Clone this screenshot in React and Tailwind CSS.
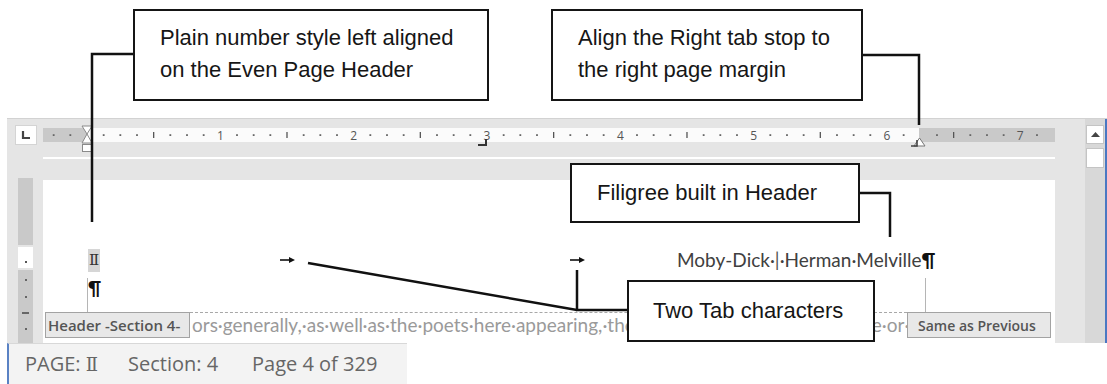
import React from "react";

const INCH = 133.33;
const X0 = 44;

function Ruler() {
  const marks = [];
  for (let i = -2; i <= 64; i++) {
    const x = X0 + i * (INCH / 8);
    if (x < 2 || x > 1010) continue;
    if (i === 0 || i === 50) continue;
    if (i % 8 === 0) {
      marks.push(
        <text key={i} x={x} y={15.5} fontSize="12" fill="#555" textAnchor="middle" fontFamily="'Open Sans', sans-serif">
          {i / 8}
        </text>
      );
    } else if (i % 4 === 0) {
      marks.push(<line key={i} x1={x} x2={x} y1={8} y2={14} stroke="#555" strokeWidth="1.3" />);
    } else {
      marks.push(<rect key={i} x={x - 0.9} y={10.2} width="1.8" height="1.8" fill="#666" />);
    }
  }
  return (
    <svg width="1012" height="30" viewBox="0 0 1012 30" className="block">
      <rect x="0" y="4" width="44" height="14" fill="#c9c9c9" />
      <rect x="44" y="4" width="832" height="14" fill="#fbfbfb" />
      <rect x="876" y="4" width="136" height="14" fill="#c9c9c9" />
      {marks}
      {/* hourglass left indent */}
      <polygon points="39,2 49,2 44,10" fill="#fff" stroke="#8a8a8a" strokeWidth="1" />
      <polygon points="44,10 39,19 49,19" fill="#fff" stroke="#8a8a8a" strokeWidth="1" />
      <rect x="39.5" y="20.5" width="10" height="7" fill="#fff" stroke="#8a8a8a" strokeWidth="1" />
      {/* right tab at 3 */}
      <polyline points="435,21 443,21 443,15" fill="none" stroke="#333" strokeWidth="2" />
      {/* right indent / tab at margin */}
      <polygon points="871,22 882,22 876.5,14" fill="#fff" stroke="#777" strokeWidth="1" />
      <polyline points="868,22 874,22 874,16" fill="none" stroke="#444" strokeWidth="1.6" />
    </svg>
  );
}

function TabArrow() {
  return (
    <svg width="15" height="8" viewBox="0 0 15 8" className="block">
      <line x1="0" y1="4" x2="11" y2="4" stroke="#111" strokeWidth="1.6" />
      <polygon points="9,1 15,4 9,7" fill="#111" />
    </svg>
  );
}

function Callout({ className, children }) {
  return (
    <div
      className={
        "absolute bg-white border-2 border-[#151515] text-[22px] leading-[32px] text-[#161616] font-['Liberation_Sans',Arial,sans-serif] " +
        className
      }
    >
      {children}
    </div>
  );
}

export default function App() {
  return (
    <div className="relative w-[1107px] h-[384px] bg-white overflow-hidden">
      <div className="h-[118px]" />

      {/* Word window */}
      <div className="ml-[7px] flex h-[225px] border-t border-[#d2d2d2] bg-[#e5e5e5]">
        <div className="w-[1078px] flex flex-col">
          {/* ruler row */}
          <div className="h-[59px] flex items-start">
            <div className="ml-[8px] mt-[6px] w-[22px] h-[20px] bg-white border border-[#d4d4d4] flex items-center justify-center">
              <svg width="10" height="10" viewBox="0 0 10 10" className="block">
                <polyline points="2,1 2,8 9,8" fill="none" stroke="#444" strokeWidth="2.2" />
              </svg>
            </div>
            <div className="ml-[6px] mt-[5px] w-[1012px] flex flex-col">
              <Ruler />
              <div className="mt-[3px] h-[2px] bg-white" />
            </div>
          </div>

          {/* document row */}
          <div className="flex flex-1">
            <div className="ml-[11px] w-[15px] flex flex-col">
              <div className="h-[67px] bg-[#c9c9c9]" />
              <div className="mt-[2px] h-[21px] bg-white flex items-end justify-center pb-[5px]">
                <div className="w-[2px] h-[2px] bg-[#555]" />
              </div>
              <div className="mt-[2px] flex-1 bg-[#c9c9c9] flex flex-col items-center pt-[9px]">
                <div className="w-[2px] h-[2px] bg-[#666]" />
                <div className="mt-[15px] w-[2px] h-[2px] bg-[#666]" />
                <div className="mt-[14px] w-[7px] h-[2px] bg-[#666]" />
                <div className="mt-[14px] w-[2px] h-[2px] bg-[#666]" />
              </div>
            </div>

            <div className="ml-[10px] mt-[2px] w-[1012px] bg-white flex flex-col font-['Lato',sans-serif]">
              {/* header line */}
              <div className="mt-[68px] h-[24px] flex items-center text-[#404040] text-[19px]">
                <div className="w-[45px]" />
                <div className="w-[192px] flex items-center">
                  <span className="bg-[#d6d6d6] h-[23px] px-[1px] flex items-center font-['DejaVu_Serif',serif] text-[15px] text-[#333]">Ⅱ</span>
                </div>
                <div className="w-[290px] flex items-center">
                  <TabArrow />
                </div>
                <div className="w-[107px] flex items-center">
                  <TabArrow />
                </div>
                <div className="whitespace-nowrap">
                  Moby-Dick·<span className="text-[#555]">|</span>·Herman·Melville<span className="text-[#111] font-bold">¶</span>
                </div>
              </div>
              {/* pilcrow line */}
              <div className="mt-[5px] h-[22px] pl-[45px] flex items-center text-[18px] font-bold text-[#111]">¶</div>
              {/* bottom row */}
              <div className="mt-[13px] h-[26px] flex">
                <div className="ml-[2px] w-[145px] h-[26px] bg-[#e8e8e8] border border-[#a3a3a3] flex items-center pl-[2px] whitespace-nowrap text-[15px] font-semibold text-[#555] font-['Open_Sans',sans-serif]">
                  Header -Section 4-
                </div>
                <div className="flex-1 border-t border-dashed border-[#a8a8a8] overflow-hidden whitespace-nowrap pl-[2px] text-[19px] leading-[24px] text-[#9a9a9a]">
                  ors·generally,·as·well·as·the·poets·here·appearing,·these·extracts·are·solely·valuable·or·entertaining,·as·affording
                </div>
                <div className="mr-[4px] w-[144px] h-[26px] bg-[#e8e8e8] border border-[#a3a3a3] flex items-center pl-[10px] whitespace-nowrap text-[14px] font-semibold text-[#555] font-['Open_Sans',sans-serif]">
                  Same as Previous
                </div>
              </div>
            </div>
          </div>
        </div>

        {/* scrollbar */}
        <div className="w-[20px] bg-[#d8d8d8] flex flex-col items-center">
          <div className="mt-[6px] w-[18px] h-[19px] bg-white border border-[#c4c4c4] flex items-center justify-center">
            <svg width="9" height="5" viewBox="0 0 9 5" className="block">
              <polygon points="0,5 9,5 4.5,0" fill="#444" />
            </svg>
          </div>
          <div className="mt-[4px] w-[18px] h-[20px] bg-white border border-[#c4c4c4]" />
        </div>
        <div className="w-[2px] bg-[#4a78c2]" />
      </div>

      {/* status bar */}
      <div className="ml-[7px] w-[400px] h-[41px] border-l-2 border-[#5a82c4] border-t border-t-[#d8d8d8] bg-[#f3f3f3] flex items-center pl-[16px] text-[20px] text-[#666] font-['Open_Sans',sans-serif] whitespace-nowrap">
        <span className="w-[103px]">PAGE: <span className="font-['DejaVu_Serif',serif] text-[18px]">Ⅱ</span></span>
        <span className="w-[124px]">Section: 4</span>
        <span>Page 4 of 329</span>
      </div>

      {/* leader lines */}
      <svg className="absolute left-0 top-0 pointer-events-none" width="1107" height="384" viewBox="0 0 1107 384">
        <line x1="87.5" y1="278" x2="87.5" y2="312" stroke="#b5b5b5" strokeWidth="1" />
        <line x1="925.5" y1="278" x2="925.5" y2="312" stroke="#b5b5b5" strokeWidth="1" />
        <g fill="none" stroke="#111" strokeWidth="2.5">
          <polyline points="134,54 92,54 92,222" />
          <polyline points="862,55 919,55 919,125" />
          <polyline points="859,193 890,193 890,237" />
          <polyline points="628,310 577,310 577,270" />
          <line x1="577" y1="310" x2="308" y2="263" />
        </g>
      </svg>

      {/* callouts */}
      <Callout className="left-[133px] top-[9px] w-[356px] h-[92px] pl-[25px] pt-[11px]">
        <div>Plain number style left aligned</div>
        <div>on the Even Page Header</div>
      </Callout>
      <Callout className="left-[551px] top-[9px] w-[312px] h-[92px] pl-[25px] pt-[11px]">
        <div>Align the Right tab stop to</div>
        <div>the right page margin</div>
      </Callout>
      <Callout className="left-[570px] top-[163px] w-[290px] h-[60px] pl-[25px] flex items-center">
        <div>Filigree built in Header</div>
      </Callout>
      <Callout className="left-[627px] top-[280px] w-[248px] h-[62px] pl-[24px] flex items-center">
        <div>Two Tab characters</div>
      </Callout>
    </div>
  );
}
